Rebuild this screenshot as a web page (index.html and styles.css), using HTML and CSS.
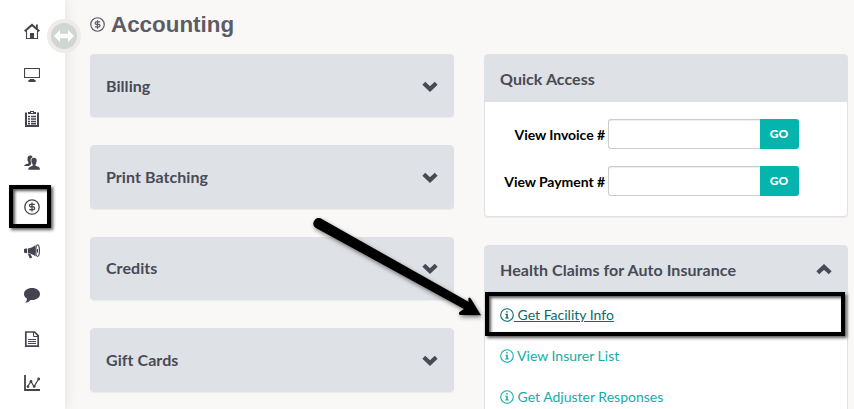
FILE: index.html
```html
<!DOCTYPE html>
<html lang="en">
<head>
    <meta charset="UTF-8">
    <meta name="viewport" content="width=device-width, initial-scale=1.0">
    <title>Accounting</title>
    <link rel="stylesheet" href="styles.css">
</head>
<body>
    <!-- Shared icons -->
    <svg class="sprite">
        <symbol id="dollar" viewBox="0 0 16 16">
            <circle cx="8" cy="8" r="7.2" fill="none" stroke="currentColor" stroke-width="1.3"/>
            <path d="M10.8 5.300H6.500Q5.500 5.300 5.500 6.500T6.500 7.900H9.600Q10.600 7.900 10.600 9.200T9.600 10.600H5.300M8 3.500V12.500" fill="none" stroke="currentColor" stroke-width="1.300"/>
        </symbol>
        <symbol id="info" viewBox="0 0 14 14">
            <circle cx="7" cy="7" r="6.3" fill="none" stroke="currentColor" stroke-width="1.1"/>
            <path d="M6.2 3.2H7.8V4.6H6.2ZM5.3 5.7H7.8V9.4H8.8V10.4H5.2V9.4H6.2V6.7H5.3Z" fill="currentColor"/>
        </symbol>
        <symbol id="chevron" viewBox="0 0 16 12">
            <path d="M1.800 3.200L8 9L14.200 3.200" fill="none" stroke="currentColor" stroke-width="4.200"/>
        </symbol>
    </svg>

    <div class="layout">
        <nav class="sidebar">
            <a class="nav-item"><svg viewBox="0 0 16 16"><path d="M.7 8.3L8 1.9L15.3 8.3" fill="none" stroke="currentColor" stroke-width="2"/><path d="M12 1.6h1.8v4H12z"/><path d="M2.500 8V15.500H13.500V8" fill="none" stroke="currentColor" stroke-width="1.100"/><path d="M6 10h4v5.500H6z"/></svg></a>
            <a class="nav-item"><svg viewBox="0 0 16 16"><path d="M.5 1.500H15.500V10.500H.5Z" fill="none" stroke="currentColor" stroke-width="1.200"/><path d="M6 12h4l.6 1h1V15H4.400V13h1z"/></svg></a>
            <a class="nav-item"><svg viewBox="0 0 16 16"><path d="M2 1.500V15H14V1.500" fill="none" stroke="currentColor" stroke-width="2"/><path fill-rule="evenodd" d="M4 1H6V0H10V1H12V3H4ZM7 1V2H9V1Z"/><path d="M4 5.500h2M7 5.500h5M4 8h2M7 8h5M4 10.500h2M7 10.500h5M4 12.800h2M7 12.800h5" stroke="currentColor" stroke-width="1.600"/></svg></a>
            <a class="nav-item"><svg viewBox="0 0 16 16"><path d="M3.500 3.500C3.500 1.500 4.500.5 6.200.5C7.500.5 8.400 1.100 8.600 2.200C6.900 2.900 6.300 4.300 6.700 6.300C7 7.500 7.300 8.300 7.200 9.200L5 11H.2C.3 9.500 1.500 9.300 4.500 8.400V7.500C3.700 6.400 3.500 5 3.500 3.500Z"/><path d="M7.400 5.500C7.400 3.700 8.400 2.700 10 2.700S12.700 3.700 12.700 5.500C12.700 7.200 12.200 8.400 11.500 9.200V10.800C14.500 11.700 16 12.200 16 14.800H4.200C4.300 12.300 5.600 11.700 8.700 10.800V9.200C7.900 8.400 7.400 7.200 7.400 5.500Z"/></svg></a>
            <a class="nav-item active"><svg><use href="#dollar"/></svg></a>
            <a class="nav-item"><svg viewBox="0 0 16 16"><path d="M0 6L2 5.400L3.200 5.500V10L2 10.200L0 9.500ZM4 5.400C7 5.200 9.500 4 11.500 2V13.400C9.300 11.500 7 10.500 4 10.200ZM3.800 10.800L6.400 11L8.300 14.600L5.800 15.400Z"/><ellipse cx="13.600" cy="7.700" rx="1.800" ry="5.800" fill="none" stroke="currentColor" stroke-width="1.200"/><path d="M12.800 6h1.200v3.400h-1.200z"/></svg></a>
            <a class="nav-item"><svg viewBox="0 0 16 16"><path d="M8 1C12.500 1 16 3.500 16 7S12.500 13 8 13L6.500 12.900C5.300 14.500 3.500 15.500 1 15.500C2.500 14.500 3 13.500 3 11.800C1.200 10.700 0 9 0 7C0 3.500 3.500 1 8 1Z"/></svg></a>
            <a class="nav-item"><svg viewBox="0 0 16 16"><path d="M1.800 1H10.500L14.200 4.700V15.200H1.800Z" fill="none" stroke="currentColor" stroke-width="1.700"/><path d="M9.500 1V5.500H14.300M4 8.500H12M4 10.500H12M4 12.500H12" fill="none" stroke="currentColor" stroke-width="1"/></svg></a>
            <a class="nav-item"><svg viewBox="0 0 16 16"><path d="M1 0V15H16" fill="none" stroke="currentColor" stroke-width="1.800"/><path d="M3.500 11.700L7 6.500L10 11.500L14.800 3.800" fill="none" stroke="currentColor" stroke-width="1.200"/><circle cx="4" cy="11.600" r="1.300"/><circle cx="7" cy="6.500" r="1.400"/><circle cx="10.200" cy="11.400" r="1.400"/><circle cx="14.700" cy="4" r="1.400"/></svg></a>
            <button class="toggle"><svg viewBox="0 0 20 12"><path d="M0 6L6 0V3.700H14V0L20 6L14 12V8.300H6V12Z"/></svg></button>
        </nav>

        <main class="content">
            <h1 class="page-title"><svg><use href="#dollar"/></svg>Accounting</h1>
            <div class="columns">
                <div class="column">
                    <section class="card collapsed"><h2>Billing</h2><svg class="chevron"><use href="#chevron"/></svg></section>
                    <section class="card collapsed"><h2>Print Batching</h2><svg class="chevron"><use href="#chevron"/></svg></section>
                    <section class="card collapsed"><h2>Credits</h2><svg class="chevron"><use href="#chevron"/></svg></section>
                    <section class="card collapsed"><h2>Gift Cards</h2><svg class="chevron"><use href="#chevron"/></svg></section>
                </div>

                <div class="column">
                    <section class="card">
                        <div class="card-header"><h2>Quick Access</h2></div>
                        <div class="quick-body">
                            <div class="form-row">
                                <label for="invoice">View Invoice #</label>
                                <input type="text" id="invoice"><button class="btn-go">GO</button>
                            </div>
                            <div class="form-row">
                                <label for="payment">View Payment #</label>
                                <input type="text" id="payment"><button class="btn-go">GO</button>
                            </div>
                        </div>
                    </section>

                    <section class="card">
                        <div class="card-header"><h2>Health Claims for Auto Insurance</h2><svg class="chevron up"><use href="#chevron"/></svg></div>
                        <div class="link-list">
                            <a class="link-row highlight"><svg><use href="#info"/></svg><span>&nbsp;Get Facility Info</span></a>
                            <a class="link-row"><svg><use href="#info"/></svg><span>&nbsp;View Insurer List</span></a>
                            <a class="link-row"><svg><use href="#info"/></svg><span>&nbsp;Get Adjuster Responses</span></a>
                        </div>
                    </section>
                </div>
            </div>
        </main>
    </div>

    <!-- Pointer arrow over the cards -->
    <svg class="arrow" viewBox="0 0 180 110">
        <path d="M10.500 8.300L158.500 91.800L158.300 88.500Q159.300 86.500 160.800 88.500L171 105.300L150 105Q148 103.700 149.500 102L154 99L5.500 17.700A5.400 5.400 0 0 1 10.500 8.300Z"/>
    </svg>
</body>
</html>
```

FILE: styles.css
```css
*,
*::after {
    margin: 0;
    padding: 0;
    box-sizing: border-box;
}

body {
    font-family: Lato, "Liberation Sans", sans-serif;
    font-size: 14px;
    color: #484a56;
    background: #f9f8f6;
    height: 409px;
    overflow: hidden;
    position: relative;
}

svg {
    display: block;
    fill: currentColor;
}

.sprite {
    display: none;
}

.layout {
    display: flex;
    height: 409px;
}

/* Sidebar */
.sidebar {
    position: relative;
    width: 65px;
    flex-shrink: 0;
    padding-top: 9px;
    background: #fff;
    box-shadow: 0 0 14px rgba(0, 0, 0, 0.1);
}

.nav-item {
    position: relative;
    display: flex;
    height: 44px;
    align-items: center;
    padding-left: 24px;
    color: #444450;
}

.nav-item svg {
    width: 16px;
    height: 16px;
}

.nav-item.active::after {
    content: "";
    position: absolute;
    left: 9px;
    top: 0;
    width: 42px;
    height: 43px;
    border: 4px solid #000;
    box-shadow: 2px 2px 3px rgba(0, 0, 0, 0.65), inset 2px 2px 3px rgba(0, 0, 0, 0.65);
}

.toggle {
    position: absolute;
    left: 47px;
    top: 19px;
    width: 34px;
    height: 34px;
    display: flex;
    align-items: center;
    justify-content: center;
    border: 4px solid #eeebe9;
    border-radius: 50%;
    background: #d0d6d2;
    color: #fff;
}

.toggle svg {
    width: 20px;
    height: 12px;
    flex-shrink: 0;
}

/* Content */
.content {
    flex: 1;
    padding: 9px 6px 0 25px;
}

.page-title {
    display: flex;
    align-items: center;
    gap: 6px;
    height: 31px;
    margin-bottom: 14px;
    font: bold 22.4px "Liberation Sans", Arial, sans-serif;
    color: #5b5c66;
}

.page-title svg {
    width: 15px;
    height: 15px;
}

.columns {
    display: grid;
    grid-template-columns: 364px 364px;
    gap: 30px;
}

.column {
    display: flex;
    flex-direction: column;
    gap: 28px;
}

.card {
    border: 1px solid #dee1e6;
    border-radius: 4px;
    background: #fff;
    box-shadow: 0 1px 1px rgba(0, 0, 0, 0.05);
}

.card h2 {
    font-size: 16px;
    font-weight: 700;
    line-height: 20px;
    letter-spacing: 0.06px;
}

.card.collapsed,
.card-header {
    display: flex;
    align-items: center;
    justify-content: space-between;
    padding: 0 15px;
    background: #dee1e6;
}

.card.collapsed {
    height: 63.4px;
}

.card-header {
    height: 47px;
}

.chevron {
    width: 16px;
    height: 12px;
}

.chevron.up {
    transform: rotate(180deg);
}

.quick-body {
    display: flex;
    flex-direction: column;
    gap: 17px;
    padding: 17px 0 20px;
}

.form-row {
    display: flex;
    align-items: center;
}

.form-row label {
    width: 120px;
    margin-right: 3px;
    text-align: right;
    font-weight: 700;
    letter-spacing: -0.05px;
    color: #000;
}

.form-row input {
    width: 152px;
    height: 30px;
    border: 1px solid #ccc;
    border-right: none;
    border-radius: 3px 0 0 3px;
    box-shadow: inset 0 1px 1px rgba(0, 0, 0, 0.075);
}

.btn-go {
    width: 39px;
    height: 30px;
    padding: 0 1px 1px 0;
    border: none;
    border-radius: 0 3px 3px 0;
    background: #06b4ae;
    color: #fff;
    font: 900 12px Lato, sans-serif;
}

.link-list {
    padding-top: 1px;
}

.link-row {
    position: relative;
    display: flex;
    align-items: center;
    height: 41px;
    padding-left: 15px;
    color: #12aea8;
}

.link-row svg {
    width: 14px;
    height: 14px;
}

.link-row.highlight {
    color: #0a6b68;
}

.link-row.highlight span {
    text-decoration: underline;
}

.link-row.highlight::after {
    content: "";
    position: absolute;
    left: 0;
    top: -2px;
    width: 360px;
    height: 44px;
    border: 4px solid #000;
    box-shadow: 2px 2px 3px rgba(0, 0, 0, 0.65), inset 2px 2px 3px rgba(0, 0, 0, 0.65);
}

.arrow {
    position: absolute;
    left: 310px;
    top: 210px;
    width: 180px;
    height: 110px;
    fill: #000;
    filter: drop-shadow(1px 2px 2px rgba(0, 0, 0, 0.5));
}
```
